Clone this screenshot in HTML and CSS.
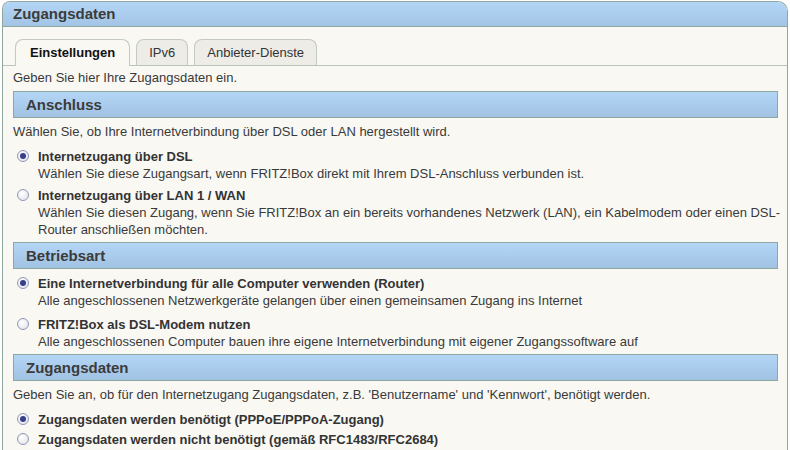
FILE: index.html
```html
<!DOCTYPE html>
<html lang="de">
<head>
  <meta charset="UTF-8" />
  <title>Zugangsdaten</title>
  <link rel="stylesheet" href="styles.css">
</head>
<body>

  <div class="box">
    <div class="box-head">Zugangsdaten</div>

    <div class="tabs">
      <div class="tab active">Einstellungen</div>
      <div class="tab">IPv6</div>
      <div class="tab">Anbieter-Dienste</div>
    </div>

    <div class="box-body">
      <p class="intro">Geben Sie hier Ihre Zugangsdaten ein.</p>

      <h2 class="section-head">Anschluss</h2>
      <p class="hint">Wählen Sie, ob Ihre Internetverbindung über DSL oder LAN hergestellt wird.</p>
      <div class="option">
        <span class="radio checked"></span>
        <div class="option-text">
          <div class="option-title">Internetzugang über DSL</div>
          <div>Wählen Sie diese Zugangsart, wenn FRITZ!Box direkt mit Ihrem DSL-Anschluss verbunden ist.</div>
        </div>
      </div>
      <div class="option">
        <span class="radio"></span>
        <div class="option-text">
          <div class="option-title">Internetzugang über LAN 1 / WAN</div>
          <div>Wählen Sie diesen Zugang, wenn Sie FRITZ!Box an ein bereits vorhandenes Netzwerk (LAN), ein Kabelmodem oder einen DSL-Router anschließen möchten.</div>
        </div>
      </div>

      <h2 class="section-head">Betriebsart</h2>
      <div class="option first">
        <span class="radio checked"></span>
        <div class="option-text">
          <div class="option-title">Eine Internetverbindung für alle Computer verwenden (Router)</div>
          <div>Alle angeschlossenen Netzwerkgeräte gelangen über einen gemeinsamen Zugang ins Internet</div>
        </div>
      </div>
      <div class="option">
        <span class="radio"></span>
        <div class="option-text">
          <div class="option-title">FRITZ!Box als DSL-Modem nutzen</div>
          <div>Alle angeschlossenen Computer bauen ihre eigene Internetverbindung mit eigener Zugangssoftware auf</div>
        </div>
      </div>

      <h2 class="section-head">Zugangsdaten</h2>
      <p class="hint">Geben Sie an, ob für den Internetzugang Zugangsdaten, z.B. 'Benutzername' und 'Kennwort', benötigt werden.</p>
      <div class="option">
        <span class="radio checked"></span>
        <div class="option-title">Zugangsdaten werden benötigt (PPPoE/PPPoA-Zugang)</div>
      </div>
      <div class="option tight">
        <span class="radio"></span>
        <div class="option-title">Zugangsdaten werden nicht benötigt (gemäß RFC1483/RFC2684)</div>
      </div>

      <div class="section-end"></div>
    </div>
  </div>

</body>
</html>
```

FILE: styles.css
```css
body {
  margin: 0;
  background: #fff;
  font-family: "Liberation Sans", Arial, sans-serif;
  font-size: 13px;
  line-height: 17px;
  color: #3a3a3a;
}
.box {
  margin: 1px 2px 0 2px;
  border: 1px solid #8fa89e;
  border-bottom: none;
  border-radius: 8px 10px 0 0;
  background: #f9f8f3;
  min-height: 460px;
  overflow: hidden;
}
.box-head {
  height: 24px;
  line-height: 24px;
  padding-left: 10px;
  font-size: 15px;
  font-weight: bold;
  color: #3b3b3b;
  background: linear-gradient(#b4d6f6, #a3c4e4);
  border-bottom: 1px solid #8fa89e;
}
.tabs {
  display: flex;
  gap: 6px;
  margin-top: 12px;
  padding-left: 12px;
  border-bottom: 1px solid #b9c3bd;
  height: 26px;
}
.tab {
  height: 25px;
  line-height: 25px;
  padding: 0 12px;
  border: 1px solid #c3c9c3;
  border-bottom: none;
  border-radius: 8px 8px 0 0;
  background: #edece7;
  color: #333;
}
.tab.active {
  height: 26px;
  padding: 0 14px;
  background: #f9f8f3;
  font-weight: bold;
  color: #111;
}
.box-body {
  padding: 3px 9px 0 10px;
}
p {
  margin: 0;
}
.section-head {
  margin: 4px 0 0 0;
  height: 25px;
  line-height: 25px;
  padding-left: 12px;
  font-size: 15px;
  font-weight: bold;
  color: #3b3b3b;
  background: linear-gradient(#b4d6f6, #a1c2e2);
  border: 1px solid #8fa89e;
}
.intro + .section-head {
  margin-top: 5px;
}
.hint {
  margin-top: 5px;
}
.option {
  display: flex;
  gap: 9px;
  margin-top: 5px;
  padding-left: 4px;
}
.option-text {
  margin-right: -10px;
}
.hint + .option {
  margin-top: 8px;
}
.option.first {
  margin-top: 6px;
}
.option.first + .option {
  margin-top: 7px;
}
.option.tight {
  margin-top: 3px;
}
.option-title {
  font-weight: bold;
  color: #333;
}
.radio {
  flex: none;
  position: relative;
  width: 10px;
  height: 10px;
  margin-top: 2px;
  border: 1px solid #8f97b6;
  border-radius: 50%;
  background: radial-gradient(circle at 40% 35%, #fff, #dfe1ea);
}
.radio.checked::after {
  content: "";
  position: absolute;
  left: 2px;
  top: 2px;
  width: 6px;
  height: 6px;
  border-radius: 50%;
  background: #34408a;
}
.section-end {
  margin-top: 4px;
  border-top: 1px solid #8fa89e;
}
```
